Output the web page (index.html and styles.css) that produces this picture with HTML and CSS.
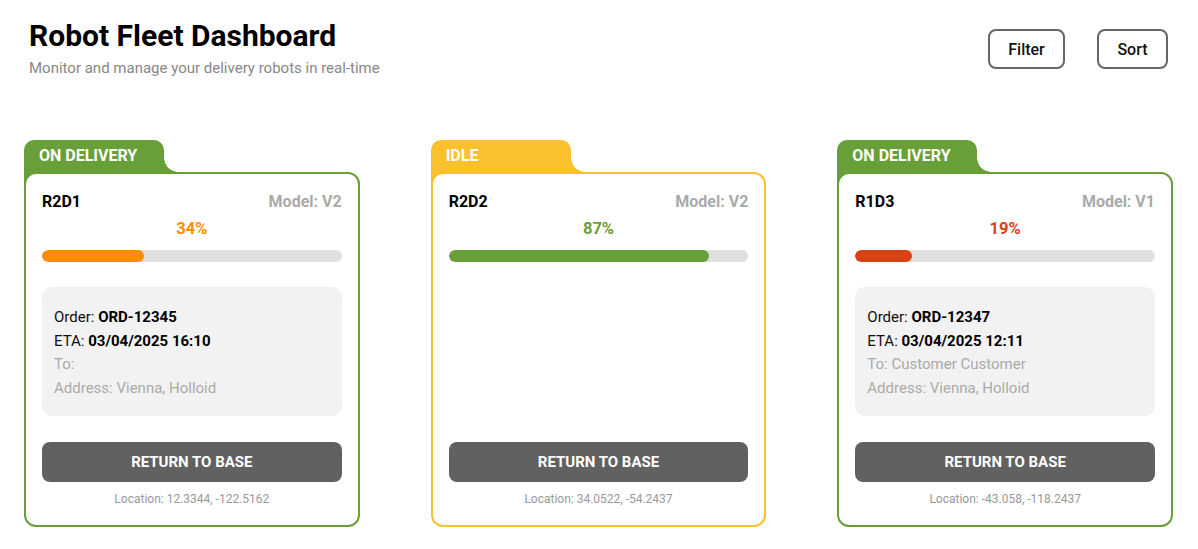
FILE: index.html
```html
<!DOCTYPE html>
<html lang="en">
<head>
<meta charset="utf-8">
<title>Robot Fleet Dashboard</title>
<link rel="stylesheet" href="styles.css">
</head>
<body>
<div class="page">
  <header class="header">
    <div class="heading">
      <h1 class="title">Robot Fleet Dashboard</h1>
      <p class="subtitle">Monitor and manage your delivery robots in real-time</p>
    </div>
    <div class="actions">
      <button class="btn-outline">Filter</button>
      <button class="btn-outline btn-sort">Sort</button>
    </div>
  </header>

  <main class="grid">
    <section class="card card-green">
      <div class="tab">ON DELIVERY</div>
      <div class="body">
        <div class="row">
          <span class="name">R2D1</span>
          <span class="model">Model: V2</span>
        </div>
        <div class="pct pct-orange">34%</div>
        <div class="bar"><div class="fill fill-orange" style="width:34%"></div></div>
        <div class="info">
          <div class="line">Order: <b>ORD-12345</b></div>
          <div class="line">ETA: <b>03/04/2025 16:10</b></div>
          <div class="line muted">To:</div>
          <div class="line muted">Address: Vienna, Holloid</div>
        </div>
        <button class="btn-return">RETURN TO BASE</button>
        <div class="location">Location: 12.3344, -122.5162</div>
      </div>
    </section>

    <section class="card card-yellow">
      <div class="tab">IDLE</div>
      <div class="body">
        <div class="row">
          <span class="name">R2D2</span>
          <span class="model">Model: V2</span>
        </div>
        <div class="pct pct-green">87%</div>
        <div class="bar"><div class="fill fill-green" style="width:87%"></div></div>
        <button class="btn-return">RETURN TO BASE</button>
        <div class="location">Location: 34.0522, -54.2437</div>
      </div>
    </section>

    <section class="card card-green">
      <div class="tab">ON DELIVERY</div>
      <div class="body">
        <div class="row">
          <span class="name">R1D3</span>
          <span class="model">Model: V1</span>
        </div>
        <div class="pct pct-red">19%</div>
        <div class="bar"><div class="fill fill-red" style="width:19%"></div></div>
        <div class="info">
          <div class="line">Order: <b>ORD-12347</b></div>
          <div class="line">ETA: <b>03/04/2025 12:11</b></div>
          <div class="line muted">To: Customer Customer</div>
          <div class="line muted">Address: Vienna, Holloid</div>
        </div>
        <button class="btn-return">RETURN TO BASE</button>
        <div class="location">Location: -43.058, -118.2437</div>
      </div>
    </section>
  </main>
</div>
</body>
</html>
```

FILE: styles.css
```css
* { box-sizing: border-box; }

html, body {
  margin: 0;
  padding: 0;
  background: #ffffff;
  font-family: Roboto, "Liberation Sans", Arial, sans-serif;
  color: #111;
}

.page {
  padding: 18px 25px 0 24px;
}

.header {
  display: flex;
  justify-content: space-between;
  align-items: flex-start;
  padding: 0 5px 0 5px;
}

.title {
  margin: 0;
  font-size: 30px;
  line-height: 36px;
  font-weight: 700;
  color: #000;
}

.subtitle {
  margin: 4px 0 0;
  font-size: 15px;
  line-height: 20px;
  color: #888888;
}

.actions {
  display: flex;
  gap: 32px;
  padding-top: 11px;
}

.btn-outline {
  font-family: inherit;
  font-size: 16px;
  font-weight: 500;
  color: #111;
  background: #fff;
  border: 2px solid #666;
  border-radius: 8px;
  height: 40px;
  width: 77px;
  padding: 0;
  cursor: pointer;
}
.btn-outline.btn-sort { width: 71px; }

.grid {
  margin-top: 62px;
  display: grid;
  grid-template-columns: repeat(3, 1fr);
  column-gap: 71px;
  align-items: stretch;
}

.card {
  --c: #689f38;
  display: flex;
  flex-direction: column;
}
.card-green { --c: #689f38; }
.card-yellow { --c: #fbc02d; }

.tab {
  position: relative;
  width: 140px;
  height: 44px;
  margin-bottom: -12px;
  padding: 5px 0 0 15px;
  background: var(--c);
  border-radius: 10px 10px 0 0;
  color: #fff;
  font-size: 16px;
  font-weight: 700;
  line-height: 22px;
}
.tab::after {
  content: "";
  position: absolute;
  left: 140px;
  top: 18px;
  width: 14px;
  height: 14px;
  background: radial-gradient(circle at 100% 0, transparent 13.5px, var(--c) 14px);
}

.body {
  position: relative;
  flex: 1;
  display: flex;
  flex-direction: column;
  background: #fff;
  border: 2px solid var(--c);
  border-radius: 12px;
  padding: 17px 16px 18px;
}

.row {
  display: flex;
  justify-content: space-between;
  font-size: 16px;
  line-height: 22px;
  font-weight: 700;
}
.name { color: #000; }
.model { color: #aaaaaa; }

.pct {
  margin-top: 5px;
  text-align: center;
  font-size: 16.5px;
  line-height: 22px;
  font-weight: 700;
}
.pct-orange { color: #ff8c00; }
.pct-green { color: #689f38; }
.pct-red { color: #d84315; }

.bar {
  margin-top: 10px;
  height: 12px;
  border-radius: 6px;
  background: #e0e0e0;
  overflow: hidden;
}
.fill { height: 100%; border-radius: 6px; }
.fill-orange { background: #ff8c00; }
.fill-green { background: #689f38; }
.fill-red { background: #d84315; }

.info {
  margin-top: 25px;
  background: #f2f2f2;
  border-radius: 10px;
  padding: 19px 12px 16px;
  font-size: 15px;
  line-height: 23.5px;
  color: #111;
}
.info b { font-weight: 700; color: #000; }
.muted { color: #aaaaaa; }

.btn-return {
  margin-top: auto;
  height: 40px;
  width: 100%;
  border: none;
  border-radius: 8px;
  background: #616161;
  color: #fff;
  font-family: inherit;
  font-size: 15px;
  font-weight: 700;
  cursor: pointer;
}
.info + .btn-return { margin-top: 26px; }

.location {
  margin-top: 9px;
  text-align: center;
  font-size: 12px;
  line-height: 16px;
  color: #999999;
}
```
